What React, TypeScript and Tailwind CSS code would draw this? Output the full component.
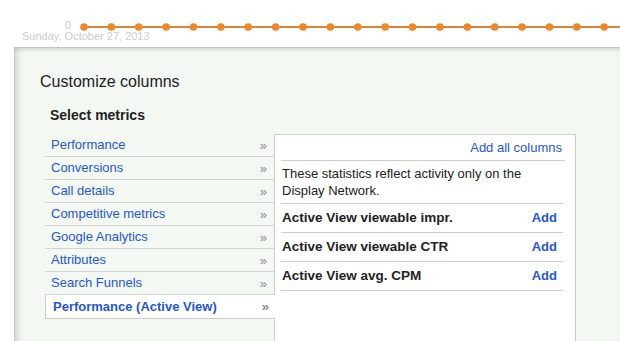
import React from "react";

const METRICS = [
  "Performance",
  "Conversions",
  "Call details",
  "Competitive metrics",
  "Google Analytics",
  "Attributes",
  "Search Funnels",
];

const ACTIVE_VIEW_COLUMNS = [
  "Active View viewable impr.",
  "Active View viewable CTR",
  "Active View avg. CPM",
];

function Chevrons() {
  return <span className="text-[13px] leading-[13px] text-[#8a8a8a]">»</span>;
}

function ChartLine() {
  const dots = Array.from({ length: 20 }, (_, i) => 8 + i * 27.38);
  return (
    <svg width="544" height="14" viewBox="0 0 544 14" className="block shrink-0">
      <line x1="8" y1="7" x2="544" y2="7" stroke="#d98633" strokeWidth="2" />
      {dots.map(cx => (
        <circle key={cx} cx={cx} cy="7" r="3.8" fill="#f0862a" />
      ))}
    </svg>
  );
}

export default function App() {
  return (
    <div className="w-[620px] h-[341px] overflow-hidden bg-white font-['Liberation_Sans',Arial,sans-serif]">
      {/* chart tail */}
      <div className="h-[47px] pt-[20px]">
        <div className="flex items-start h-[11px]">
          <span className="ml-[65px] w-[11px] text-[11px] leading-[11px] text-[#c8c8c8]">0</span>
          <ChartLine />
        </div>
        <div className="pl-[22px] text-[11px] leading-[11px] text-[#cccccc]">
          Sunday, October 27, 2013
        </div>
      </div>

      {/* customize panel */}
      <div className="ml-[14px] h-[294px] border-l border-t border-[#c3c7c3] bg-[#f3f8f3] shadow-[inset_7px_0_7px_-4px_rgba(0,0,0,0.13),inset_0_4px_4px_-2px_rgba(0,0,0,0.12)] pl-[25px] pt-[24px]">
        <h2 className="text-[16px] leading-[20px] text-[#222]">Customize columns</h2>
        <h3 className="mt-[14px] ml-[10px] text-[14px] leading-[18px] font-bold text-[#222]">Select metrics</h3>

        <div className="mt-[10px] ml-[5px] flex items-start">
          {/* metric categories */}
          <div className="w-[229px]">
            {METRICS.map(m => (
              <div
                key={m}
                className="h-[23px] border-b border-[#d2d4d2] flex items-center justify-between pl-[6px] pr-[7px] text-[13px] text-[#2457d1]"
              >
                <span>{m}</span>
                <Chevrons />
              </div>
            ))}
            <div className="relative z-10 mr-[-1px] h-[24px] border-b border-l border-[#cccccc] bg-white flex items-center justify-between pl-[7px] pr-[6px] text-[13px] font-bold text-[#2457d1]">
              <span>Performance (Active View)</span>
              <Chevrons />
            </div>
          </div>

          {/* columns */}
          <div className="w-[302px] h-[220px] border border-[#cccccc] bg-white">
            <div className="h-[25px] flex items-center justify-end pr-[13px] text-[13px] text-[#2457d1]">
              Add all columns
            </div>
            <div className="ml-[6px] mr-[10px] border-t border-[#cccccc]" />
            <div className="ml-[6px] mr-[12px] border-b border-[#cccccc] pl-[1px] pt-[4px] pb-[4px] text-[13px] leading-[17px] text-[#222]">
              These statistics reflect activity only on the Display Network.
            </div>
            <div className="ml-[6px] mr-[12px]">
              {ACTIVE_VIEW_COLUMNS.map(c => (
                <div
                  key={c}
                  className="h-[29px] border-b border-[#cccccc] flex items-center justify-between pl-[1px] pr-[6px] text-[13.5px]"
                >
                  <span className="font-bold text-[#222]">{c}</span>
                  <span className="font-bold text-[13px] text-[#2457d1]">Add</span>
                </div>
              ))}
            </div>
          </div>
        </div>
      </div>
    </div>
  );
}
